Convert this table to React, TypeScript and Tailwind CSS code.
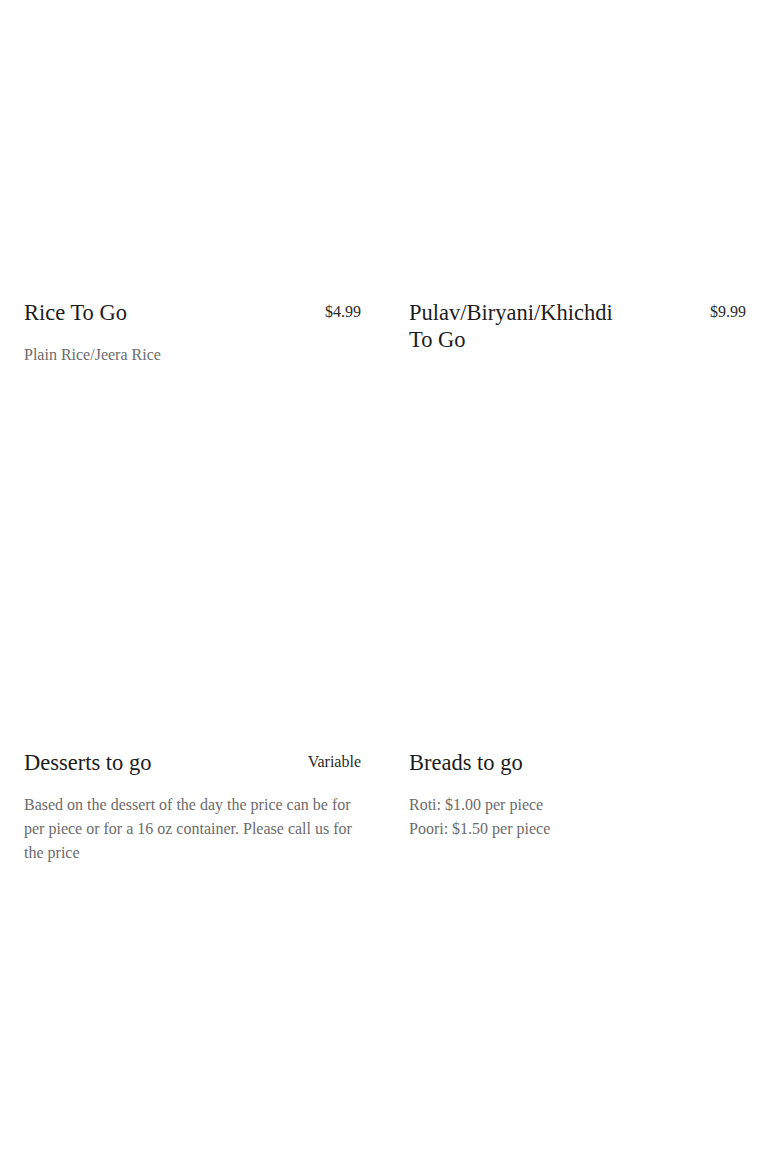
import React from "react"

type Item = {
  title: string
  price?: string
  lines: string[]
}

const items: Item[] = [
  { title: "Rice To Go", price: "$4.99", lines: ["Plain Rice/Jeera Rice"] },
  { title: "Pulav/Biryani/Khichdi To Go", price: "$9.99", lines: [] },
  {
    title: "Desserts to go",
    price: "Variable",
    lines: ["Based on the dessert of the day the price can be for per piece or for a 16 oz container. Please call us for the price"],
  },
  { title: "Breads to go", lines: ["Roti: $1.00 per piece", "Poori: $1.50 per piece"] },
]

function MenuCard({ item }: { item: Item }) {
  return (
    <div className="h-[450px] flex flex-col">
      <div className="h-[283px] w-full bg-white" />
      <div className="mt-4 flex items-start justify-between gap-4">
        <h3 className="w-[62%] text-[22.5px] leading-[27px] text-[#1c1c1c] font-normal">{item.title}</h3>
        {item.price && <span className="mt-px text-base leading-6 text-[#2a2a2a] whitespace-nowrap">{item.price}</span>}
      </div>
      {item.lines.length > 0 && (
        <div className="mt-[17px] text-base leading-6 text-[#6b6b6b]">
          {item.lines.map((l) => (
            <p key={l}>{l}</p>
          ))}
        </div>
      )}
    </div>
  )
}

export default function App() {
  return (
    <div className="min-h-screen bg-white px-6 font-['Liberation_Serif',serif]">
      <div className="grid grid-cols-2 gap-x-12">
        {items.map((it) => (
          <MenuCard key={it.title} item={it} />
        ))}
      </div>
    </div>
  )
}
